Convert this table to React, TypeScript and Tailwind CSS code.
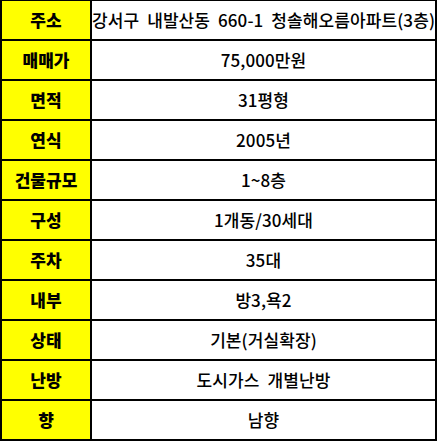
import React from 'react';

const rows: [string, string][] = [
    ['주소', '강서구 내발산동 660-1 청솔해오름아파트(3층)'],
    ['매매가', '75,000만원'],
    ['면적', '31평형'],
    ['연식', '2005년'],
    ['건물규모', '1~8층'],
    ['구성', '1개동/30세대'],
    ['주차', '35대'],
    ['내부', '방3,욕2'],
    ['상태', '기본(거실확장)'],
    ['난방', '도시가스 개별난방'],
    ['향', '남향'],
];

const App = () => {
    return (
        <div
            className="w-[438px] h-[441px] bg-white"
            style={{ fontFamily: '"Malgun Gothic", "Noto Sans CJK KR", "Noto Sans", sans-serif' }}
        >
            <div className="w-[437px] border-t border-l-2 border-r-2 border-black">
                {rows.map(([label, value]) => (
                    <div key={label} className="flex h-[40px] border-b-2 border-black">
                        <div className="w-[90px] shrink-0 bg-[#ffff00] border-r-2 border-black flex items-center justify-center text-[17px] font-extrabold text-black">
                            {label}
                        </div>
                        <div className="flex-1 flex items-center justify-center text-[17px] font-medium text-black whitespace-nowrap [word-spacing:4px] tracking-[0.1px]">
                            {value}
                        </div>
                    </div>
                ))}
            </div>
        </div>
    );
};

export default App;
